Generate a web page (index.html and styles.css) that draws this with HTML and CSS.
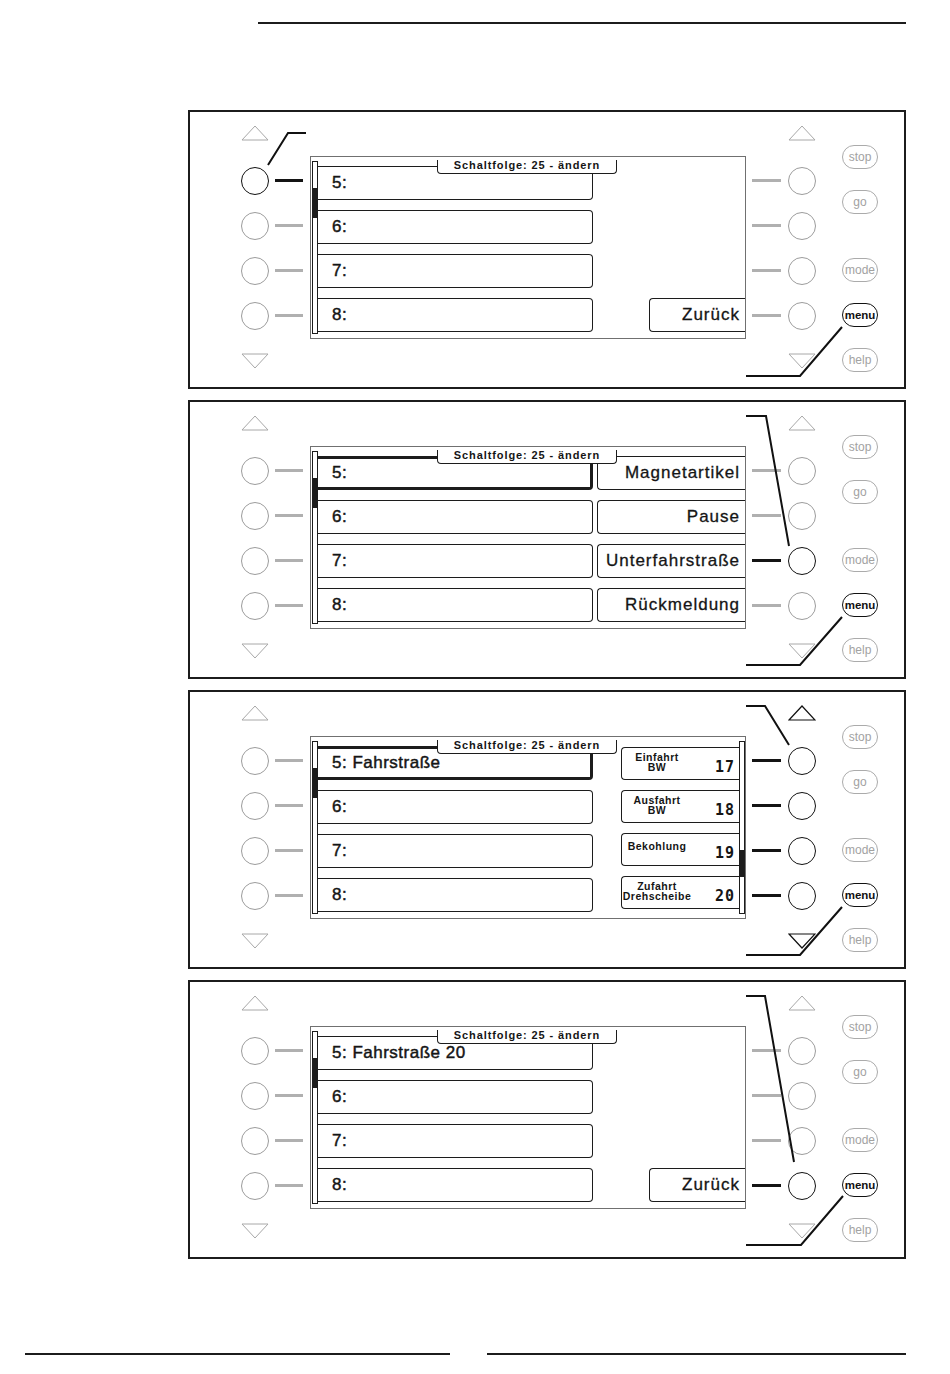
FILE: index.html
```html
<!DOCTYPE html>
<html lang="de">
<head>
<meta charset="utf-8">
<title>Schaltfolge ändern</title>
<link rel="stylesheet" href="styles.css">
</head>
<body>
<div class="page">
  <div class="rule-top"></div>

  <div class="panels">

    <!-- PANEL 1 -->
    <section class="panel">
      <div class="ctl ctl-left">
        <svg class="tri" viewBox="0 0 28 16"><polygon points="1,15 14,1 27,15"/></svg>
        <div class="key"><span class="btn on"></span><span class="wire on"></span></div>
        <div class="key"><span class="btn"></span><span class="wire"></span></div>
        <div class="key"><span class="btn"></span><span class="wire"></span></div>
        <div class="key"><span class="btn"></span><span class="wire"></span></div>
        <svg class="tri down" viewBox="0 0 28 16"><polygon points="1,1 14,15 27,1"/></svg>
      </div>
      <div class="screen">
        <div class="tab">Schaltfolge: 25 - ändern</div>
        <div class="sbar"><div class="thumb"></div></div>
        <div class="rows">
          <div class="row">5:</div>
          <div class="row">6:</div>
          <div class="row">7:</div>
          <div class="row">8:</div>
        </div>
        <div class="side">
          <div class="slot"></div>
          <div class="slot"></div>
          <div class="slot"></div>
          <div class="rbtn back">Zurück</div>
        </div>
      </div>
      <div class="ctl ctl-right">
        <svg class="tri" viewBox="0 0 28 16"><polygon points="1,15 14,1 27,15"/></svg>
        <div class="key"><span class="wire"></span><span class="btn"></span></div>
        <div class="key"><span class="wire"></span><span class="btn"></span></div>
        <div class="key"><span class="wire"></span><span class="btn"></span></div>
        <div class="key"><span class="wire"></span><span class="btn"></span></div>
        <svg class="tri down" viewBox="0 0 28 16"><polygon points="1,1 14,15 27,1"/></svg>
      </div>
      <div class="pills">
        <span class="pill stop">stop</span>
        <span class="pill go">go</span>
        <span class="pill mode">mode</span>
        <span class="pill menu on">menu</span>
        <span class="pill help">help</span>
      </div>
      <svg class="callouts" viewBox="0 0 718 279">
        <polyline points="80,55 100,23 118,23"/>
        <polyline points="654,217 612,266 558,266"/>
      </svg>
    </section>

    <!-- PANEL 2 -->
    <section class="panel">
      <div class="ctl ctl-left">
        <svg class="tri" viewBox="0 0 28 16"><polygon points="1,15 14,1 27,15"/></svg>
        <div class="key"><span class="btn"></span><span class="wire"></span></div>
        <div class="key"><span class="btn"></span><span class="wire"></span></div>
        <div class="key"><span class="btn"></span><span class="wire"></span></div>
        <div class="key"><span class="btn"></span><span class="wire"></span></div>
        <svg class="tri down" viewBox="0 0 28 16"><polygon points="1,1 14,15 27,1"/></svg>
      </div>
      <div class="screen">
        <div class="tab">Schaltfolge: 25 - ändern</div>
        <div class="sbar"><div class="thumb"></div></div>
        <div class="rows">
          <div class="row sel">5:</div>
          <div class="row">6:</div>
          <div class="row">7:</div>
          <div class="row">8:</div>
        </div>
        <div class="side">
          <div class="rbtn wide">Magnetartikel</div>
          <div class="rbtn wide">Pause</div>
          <div class="rbtn wide">Unterfahrstraße</div>
          <div class="rbtn wide">Rückmeldung</div>
        </div>
      </div>
      <div class="ctl ctl-right">
        <svg class="tri" viewBox="0 0 28 16"><polygon points="1,15 14,1 27,15"/></svg>
        <div class="key"><span class="wire"></span><span class="btn"></span></div>
        <div class="key"><span class="wire"></span><span class="btn"></span></div>
        <div class="key"><span class="wire on"></span><span class="btn on"></span></div>
        <div class="key"><span class="wire"></span><span class="btn"></span></div>
        <svg class="tri down" viewBox="0 0 28 16"><polygon points="1,1 14,15 27,1"/></svg>
      </div>
      <div class="pills">
        <span class="pill stop">stop</span>
        <span class="pill go">go</span>
        <span class="pill mode">mode</span>
        <span class="pill menu on">menu</span>
        <span class="pill help">help</span>
      </div>
      <svg class="callouts" viewBox="0 0 718 279">
        <polyline points="558,16 578,16 601,146"/>
        <polyline points="654,217 612,265 558,265"/>
      </svg>
    </section>

    <!-- PANEL 3 -->
    <section class="panel">
      <div class="ctl ctl-left">
        <svg class="tri" viewBox="0 0 28 16"><polygon points="1,15 14,1 27,15"/></svg>
        <div class="key"><span class="btn"></span><span class="wire"></span></div>
        <div class="key"><span class="btn"></span><span class="wire"></span></div>
        <div class="key"><span class="btn"></span><span class="wire"></span></div>
        <div class="key"><span class="btn"></span><span class="wire"></span></div>
        <svg class="tri down" viewBox="0 0 28 16"><polygon points="1,1 14,15 27,1"/></svg>
      </div>
      <div class="screen">
        <div class="tab">Schaltfolge: 25 - ändern</div>
        <div class="sbar"><div class="thumb"></div></div>
        <div class="rows">
          <div class="row sel">5: Fahrstraße</div>
          <div class="row">6:</div>
          <div class="row">7:</div>
          <div class="row">8:</div>
        </div>
        <div class="side side-list">
          <div class="smalls">
            <div class="sbtn"><div class="lbl">Einfahrt<br>BW</div><div class="num">17</div></div>
            <div class="sbtn"><div class="lbl">Ausfahrt<br>BW</div><div class="num">18</div></div>
            <div class="sbtn"><div class="lbl single">Bekohlung</div><div class="num">19</div></div>
            <div class="sbtn"><div class="lbl">Zufahrt<br>Drehscheibe</div><div class="num">20</div></div>
          </div>
          <div class="sbar sbar-r"><div class="thumb thumb-r"></div></div>
        </div>
      </div>
      <div class="ctl ctl-right">
        <svg class="tri on" viewBox="0 0 28 16"><polygon points="1,15 14,1 27,15"/></svg>
        <div class="key"><span class="wire on"></span><span class="btn on"></span></div>
        <div class="key"><span class="wire on"></span><span class="btn on"></span></div>
        <div class="key"><span class="wire on"></span><span class="btn on"></span></div>
        <div class="key"><span class="wire on"></span><span class="btn on"></span></div>
        <svg class="tri down on" viewBox="0 0 28 16"><polygon points="1,1 14,15 27,1"/></svg>
      </div>
      <div class="pills">
        <span class="pill stop">stop</span>
        <span class="pill go">go</span>
        <span class="pill mode">mode</span>
        <span class="pill menu on">menu</span>
        <span class="pill help">help</span>
      </div>
      <svg class="callouts" viewBox="0 0 718 279">
        <polyline points="558,16 577,16 601,55"/>
        <polyline points="654,217 612,265 558,265"/>
      </svg>
    </section>

    <!-- PANEL 4 -->
    <section class="panel">
      <div class="ctl ctl-left">
        <svg class="tri" viewBox="0 0 28 16"><polygon points="1,15 14,1 27,15"/></svg>
        <div class="key"><span class="btn"></span><span class="wire"></span></div>
        <div class="key"><span class="btn"></span><span class="wire"></span></div>
        <div class="key"><span class="btn"></span><span class="wire"></span></div>
        <div class="key"><span class="btn"></span><span class="wire"></span></div>
        <svg class="tri down" viewBox="0 0 28 16"><polygon points="1,1 14,15 27,1"/></svg>
      </div>
      <div class="screen">
        <div class="tab">Schaltfolge: 25 - ändern</div>
        <div class="sbar"><div class="thumb"></div></div>
        <div class="rows">
          <div class="row">5: Fahrstraße 20</div>
          <div class="row">6:</div>
          <div class="row">7:</div>
          <div class="row">8:</div>
        </div>
        <div class="side">
          <div class="slot"></div>
          <div class="slot"></div>
          <div class="slot"></div>
          <div class="rbtn back">Zurück</div>
        </div>
      </div>
      <div class="ctl ctl-right">
        <svg class="tri" viewBox="0 0 28 16"><polygon points="1,15 14,1 27,15"/></svg>
        <div class="key"><span class="wire"></span><span class="btn"></span></div>
        <div class="key"><span class="wire"></span><span class="btn"></span></div>
        <div class="key"><span class="wire"></span><span class="btn"></span></div>
        <div class="key"><span class="wire on"></span><span class="btn on"></span></div>
        <svg class="tri down" viewBox="0 0 28 16"><polygon points="1,1 14,15 27,1"/></svg>
      </div>
      <div class="pills">
        <span class="pill stop">stop</span>
        <span class="pill go">go</span>
        <span class="pill mode">mode</span>
        <span class="pill menu on">menu</span>
        <span class="pill help">help</span>
      </div>
      <svg class="callouts" viewBox="0 0 718 279">
        <polyline points="558,16 577,16 606,182"/>
        <polyline points="655,216 613,265 558,265"/>
      </svg>
    </section>

  </div>

  <div class="rules-bottom">
    <div class="rule rule-l"></div>
    <div class="rule rule-r"></div>
  </div>
</div>
</body>
</html>
```

FILE: styles.css
```css
html, body {
  margin: 0;
  padding: 0;
  background: #fff;
}

body {
  font-family: "Liberation Sans", Arial, sans-serif;
  color: #151515;
}

.page {
  width: 950px;
  padding-top: 22px;
}

.rule-top {
  margin-left: 258px;
  width: 648px;
  height: 2px;
  background: #1c1c1c;
}

.panels {
  margin: 86px 0 0 188px;
  display: flex;
  flex-direction: column;
  gap: 11px;
}

.panel {
  position: relative;
  width: 718px;
  height: 279px;
  box-sizing: border-box;
  border: 2px solid #1c1c1c;
  display: grid;
  grid-template-columns: 120px 436px 96px 36px;
  align-items: start;
}

/* ---------- side controls ---------- */
.ctl {
  display: flex;
  flex-direction: column;
}

.tri {
  display: block;
  width: 28px;
  height: 16px;
}

.tri polygon {
  fill: none;
  stroke: #a8a8a8;
  stroke-width: 1;
}

.tri.on polygon {
  stroke: #111;
  stroke-width: 1.2;
}

.ctl .tri {
  margin-top: 13px;
}

.ctl .tri.down {
  margin-top: 15px;
}

.ctl .key:first-of-type {
  margin-top: 17px;
}

.key {
  height: 45px;
  display: flex;
  align-items: center;
}

.ctl-left .tri {
  margin-left: 51px;
}

.ctl-left .key {
  padding-left: 51px;
  gap: 6px;
}

.ctl-right .tri {
  margin-left: 42px;
}

.ctl-right .key {
  padding-left: 6px;
  gap: 7px;
}

.btn {
  display: block;
  width: 28px;
  height: 28px;
  box-sizing: border-box;
  border: 1px solid #9c9c9c;
  border-radius: 50%;
}

.btn.on {
  border: 1.5px solid #111;
}

.wire {
  display: block;
  width: 28px;
  height: 3px;
  background: #b0b0b0;
}

.ctl-right .wire {
  width: 29px;
}

.wire.on {
  background: #141414;
}

/* ---------- pills ---------- */
.pills {
  display: flex;
  flex-direction: column;
  padding-top: 33px;
}

.pill {
  width: 36px;
  height: 24px;
  box-sizing: border-box;
  border: 1px solid #ababab;
  border-radius: 12px;
  color: #a2a2a2;
  font-size: 12px;
  display: flex;
  align-items: center;
  justify-content: center;
}

.pill.go { margin-top: 21px; }
.pill.mode { margin-top: 44px; }
.pill.menu { margin-top: 21px; }
.pill.help { margin-top: 21px; }

.pill.on {
  border: 1.5px solid #111;
  color: #111;
  font-weight: 700;
  font-size: 11.5px;
}

/* ---------- callout lines ---------- */
.callouts {
  position: absolute;
  left: -2px;
  top: -2px;
  width: 718px;
  height: 279px;
  overflow: visible;
  pointer-events: none;
}

.callouts polyline {
  fill: none;
  stroke: #111;
  stroke-width: 2;
}

/* ---------- LCD screen ---------- */
.screen {
  position: relative;
  margin-top: 44px;
  height: 183px;
  box-sizing: border-box;
  border: 1px solid #707070;
  display: flex;
}

.tab {
  position: absolute;
  left: 126px;
  top: 3px;
  width: 180px;
  height: 14px;
  box-sizing: border-box;
  border: 1px solid #1c1c1c;
  border-top: none;
  border-radius: 0 0 4px 4px;
  background: #fff;
  font-size: 11px;
  font-weight: 700;
  line-height: 11px;
  letter-spacing: 0.9px;
  text-align: center;
  white-space: nowrap;
}

.sbar {
  width: 6px;
  box-sizing: border-box;
  margin: 4px 0 4px 1px;
  border: 1px solid #1c1c1c;
}

.thumb {
  margin-top: 26px;
  height: 30px;
  background: #1c1c1c;
}

.sbar-r {
  margin: 4px 0 4px 0;
}

.thumb-r {
  margin-top: 108px;
  height: 27px;
}

.rows {
  width: 275px;
  display: flex;
  flex-direction: column;
  gap: 10px;
  padding-top: 9px;
}

.row {
  height: 34px;
  box-sizing: border-box;
  border: 1px solid #1c1c1c;
  border-left: none;
  border-radius: 0 4px 4px 0;
  display: flex;
  align-items: center;
  padding-left: 14px;
  font-size: 17px;
  letter-spacing: 0.5px;
  white-space: nowrap;
  -webkit-text-stroke: 0.45px currentColor;
}

.row.sel {
  border-width: 3px 3px 3px 0;
}

.side {
  flex: 1;
  display: flex;
  flex-direction: column;
  align-items: flex-end;
  gap: 10px;
  padding-top: 9px;
}

.slot {
  height: 34px;
}

.rbtn {
  height: 34px;
  box-sizing: border-box;
  border: 1px solid #1c1c1c;
  border-right: none;
  border-radius: 4px 0 0 4px;
  display: flex;
  align-items: center;
  justify-content: flex-end;
  padding-right: 5px;
  font-size: 17px;
  letter-spacing: 1px;
  white-space: nowrap;
  -webkit-text-stroke: 0.3px currentColor;
}

.rbtn.wide { width: 148px; }
.rbtn.back { width: 96px; }

.side-list {
  flex-direction: row;
  justify-content: flex-end;
  align-items: stretch;
  gap: 0;
  padding-top: 0;
}

.smalls {
  width: 118px;
  display: flex;
  flex-direction: column;
  gap: 10px;
  padding-top: 10px;
}

.sbtn {
  height: 33px;
  box-sizing: border-box;
  border: 1px solid #1c1c1c;
  border-right: none;
  border-radius: 4px 0 0 4px;
  display: flex;
  justify-content: space-between;
}

.sbtn .lbl {
  width: 70px;
  padding-top: 5px;
  text-align: center;
  font-size: 10.5px;
  font-weight: 700;
  line-height: 9.5px;
  letter-spacing: 0.5px;
  white-space: nowrap;
}

.sbtn .lbl.single {
  padding-top: 8px;
}

.sbtn .num {
  align-self: center;
  margin-top: 7px;
  padding-right: 4px;
  font-family: "DejaVu Sans Mono", "Liberation Mono", monospace;
  font-size: 15px;
  font-weight: 700;
  letter-spacing: 1px;
}

/* ---------- bottom rules ---------- */
.rules-bottom {
  display: flex;
  gap: 37px;
  margin-top: 94px;
  padding-left: 25px;
}

.rule {
  height: 2px;
  background: #1c1c1c;
}

.rule-l { width: 425px; }
.rule-r { width: 419px; }
```
